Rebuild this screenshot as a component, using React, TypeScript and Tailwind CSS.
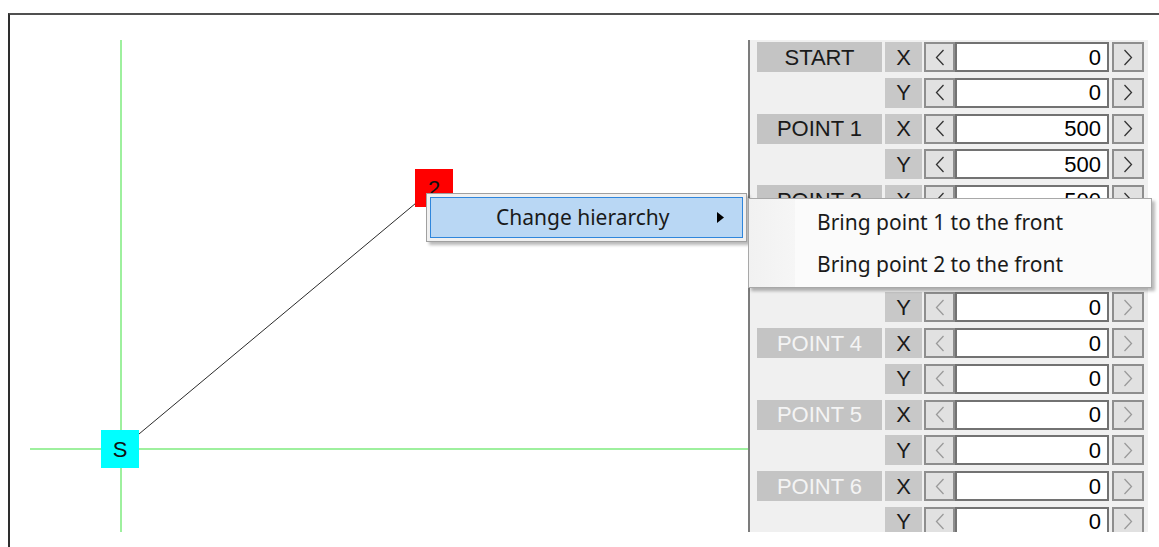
import React from 'react'

type Row = { label?: string; axis: 'X' | 'Y'; value: string; enabled: boolean; covered?: boolean }

const points = [
  { name: 'START', x: '0', y: '0', enabled: true },
  { name: 'POINT 1', x: '500', y: '500', enabled: true },
  { name: 'POINT 2', x: '500', y: '500', enabled: true },
  { name: 'POINT 3', x: '0', y: '0', enabled: false },
  { name: 'POINT 4', x: '0', y: '0', enabled: false },
  { name: 'POINT 5', x: '0', y: '0', enabled: false },
  { name: 'POINT 6', x: '0', y: '0', enabled: false },
]

// rows 5 and 6 sit fully under the open submenu
const rows: Row[] = points
  .flatMap((p) => [
    { label: p.name, axis: 'X' as const, value: p.x, enabled: p.enabled },
    { axis: 'Y' as const, value: p.y, enabled: p.enabled },
  ])
  .map((r, i) => ({ ...r, covered: i === 5 || i === 6 }))

function Chevron({ dir, dim }: { dir: 'left' | 'right'; dim: boolean }) {
  return (
    <svg width="10" height="17" viewBox="0 0 10 17" className="block">
      <polyline
        points={dir === 'left' ? '8.5,1 1.5,8.5 8.5,16' : '1.5,1 8.5,8.5 1.5,16'}
        fill="none"
        stroke={dim ? '#9a9a9a' : '#333'}
        strokeWidth="1.3"
      />
    </svg>
  )
}

function CoordRow({ row }: { row: Row }) {
  const hide = row.covered ? 'invisible' : ''
  return (
    <div className="flex h-[30px] shrink-0 items-stretch">
      <div
        className={`flex w-[125px] items-center justify-center text-[22px] ${
          row.label ? 'bg-[#c4c4c4]' : ''
        } ${row.enabled ? 'text-[#1a1a1a]' : 'text-[#f4f4f4]'}`}
      >
        <span className={hide}>{row.label}</span>
      </div>
      <div className="ml-[3px] flex w-[37px] items-center justify-center bg-[#c8c8c8] text-[22px] text-[#1a1a1a]">
        <span className={hide}>{row.axis}</span>
      </div>
      <button className="ml-[2px] flex w-[31px] items-center justify-center border-2 border-[#8e8e8e] bg-[#e1e1e1]">
        <Chevron dir="left" dim={!row.enabled} />
      </button>
      <div className="flex w-[154px] items-center justify-end border-2 border-[#727272] bg-white pr-[6px] text-[22px] text-black">
        <span className={hide}>{row.value}</span>
      </div>
      <button className="ml-[3px] flex w-[32px] items-center justify-center border-2 border-[#8e8e8e] bg-[#e1e1e1]">
        <Chevron dir="right" dim={!row.enabled} />
      </button>
    </div>
  )
}

export default function App() {
  // canvas coordinates (origin at the canvas's top-left)
  const s = { x: 90, y: 409 }
  const p2 = { x: 404, y: 148 }

  return (
    <div
      className="relative h-[547px] w-[1159px] overflow-hidden bg-white pl-[8px] pt-[13px]"
      style={{ fontFamily: '"Liberation Sans", Arial, sans-serif' }}
    >
      <div className="h-full border-l-2 border-t-2 border-l-[#2e2e2e] border-t-[#505050] pl-[20px] pt-[25px]">
        <div className="flex h-[492px]">
          {/* drawing canvas */}
          <div className="relative h-full w-[718px] shrink-0">
            <svg className="absolute inset-0" width="718" height="492">
              <rect x="90" y="0" width="2" height="492" fill="#9ef09e" />
              <rect x="0" y="408" width="718" height="2" fill="#9ef09e" />
              <line x1={s.x + 1} y1={s.y} x2={p2.x} y2={p2.y} stroke="#2a2a2a" strokeWidth="1" />
            </svg>
            <div className="absolute left-[71px] top-[390px] flex h-[38px] w-[38px] items-center justify-center bg-[#00ffff] text-[22px] text-[#111]">
              S
            </div>
            <div className="absolute left-[385px] top-[129px] flex h-[38px] w-[38px] items-center justify-center bg-[#ff0000] text-[22px] text-[#111]">
              2
            </div>
          </div>

          {/* coordinates panel */}
          <div className="h-full w-[400px] shrink-0 overflow-hidden border-l-2 border-[#7c7c7c] bg-[#f0f0f0] pl-[7px] pt-[2px]">
            <div className="flex flex-col gap-[5.75px]">
              {rows.map((r, i) => (
                <CoordRow key={i} row={r} />
              ))}
            </div>
          </div>
        </div>
      </div>

      {/* context menu */}
      <div
        className="absolute left-[426px] top-[193px] h-[49px] w-[321px] border border-[#a0a0a0] bg-[#f0f0f0] p-[3px] shadow-[3px_3px_3px_rgba(0,0,0,0.28)]"
        style={{ fontFamily: '"Noto Sans", "Open Sans", sans-serif' }}
      >
        <div className="flex h-full items-center border border-[#2f86dc] bg-[#b9d7f4] pl-[65px] pr-[18px] text-[21px] text-[#1a1a1a]">
          <span className="flex-1">Change hierarchy</span>
          <svg width="7" height="11" viewBox="0 0 7 11">
            <polygon points="0,0 7,5.5 0,11" fill="#000" />
          </svg>
        </div>
      </div>

      {/* submenu */}
      <div
        className="absolute left-[748px] top-[198px] flex h-[90px] w-[404px] border border-[#a8a8a8] bg-[#fbfbfb] shadow-[3px_3px_3px_rgba(0,0,0,0.28)]"
        style={{ fontFamily: '"Noto Sans", "Open Sans", sans-serif' }}
      >
        <div className="w-[46px] shrink-0 bg-gradient-to-r from-[#f1f1f1] to-[#f6f6f6]" />
        <div className="flex flex-1 flex-col justify-center gap-[12px] pl-[22px] text-[21px] text-[#1a1a1a]">
          <div className="leading-[30px]">Bring point 1 to the front</div>
          <div className="leading-[30px]">Bring point 2 to the front</div>
        </div>
      </div>
    </div>
  )
}
